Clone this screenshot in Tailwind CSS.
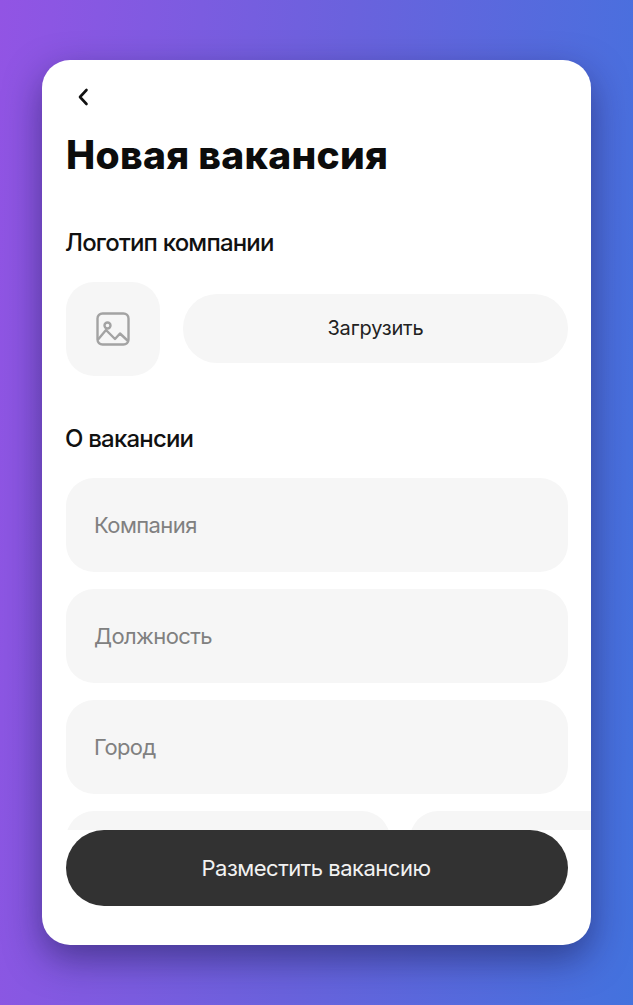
<!DOCTYPE html>
<html lang="ru">
<head>
    <meta charset="UTF-8">
    <meta name="viewport" content="width=device-width, initial-scale=1.0">
    <title>Новая вакансия</title>
    <script src="https://cdn.jsdelivr.net/npm/@tailwindcss/browser@4"></script>
</head>
<body class="h-[1005px] w-[633px] overflow-hidden bg-[linear-gradient(94deg,#9254e4_0%,#6a62dd_50%,#4372de_100%)] pt-[60px] pl-[42px] font-['Inter','Liberation_Sans',sans-serif]">

    <!-- Card -->
    <div class="flex h-[885px] w-[549px] flex-col overflow-hidden rounded-[28px] bg-white shadow-[0_14px_36px_rgba(20,20,70,0.5)]">
        <div class="h-[770px] overflow-hidden pl-6">
            <button class="mt-[26px] ml-[8px] block h-[22px] w-[18px]">
                <svg width="18" height="22" viewBox="0 0 18 22" fill="none" stroke="#111" stroke-width="2.6" stroke-linecap="round" stroke-linejoin="round"><path d="M12.5 4 L6 11 L12.5 18"/></svg>
            </button>
            <h1 class="mt-[22px] text-[39px] leading-[50px] font-extrabold tracking-[0.3px] text-[#0c0c0c]">Новая вакансия</h1>

            <h2 class="mt-[47px] -ml-px text-[24px] leading-[32px] font-medium tracking-[-0.8px] text-[#111]">Логотип компании</h2>
            <div class="mt-[23px] flex items-center gap-[23px]">
                <div class="flex h-[94px] w-[94px] items-center justify-center rounded-[28px] bg-[#f6f6f6]">
                    <svg width="34" height="34" viewBox="0 0 34 34" fill="none" stroke="#a3a3a3" stroke-width="2.4" stroke-linecap="round" stroke-linejoin="round">
                        <rect x="1.5" y="1.5" width="31" height="31" rx="5"/>
                        <circle cx="11.5" cy="13.5" r="3"/>
                        <path d="M2.5 27 L10 18 L19 27 L24 21.5 L32 29"/>
                    </svg>
                </div>
                <button class="mb-[2px] h-[69px] w-[385px] rounded-[34px] bg-[#f6f6f6] text-[20px] tracking-[-0.2px] text-[#222]">Загрузить</button>
            </div>

            <h2 class="mt-[47px] -ml-px text-[24px] leading-[32px] font-medium tracking-[-0.8px] text-[#111]">О вакансии</h2>
            <div class="mt-[22.5px] flex flex-col gap-[17.3px]">
                <div class="flex h-[94px] w-[502px] items-center rounded-[28px] bg-[#f6f6f6] pt-px pl-[28px] text-[22px] tracking-[-0.6px] text-[#808080]">Компания</div>
                <div class="flex h-[94px] w-[502px] items-center rounded-[28px] bg-[#f6f6f6] pt-px pl-[28px] text-[22px] tracking-[-0.6px] text-[#808080]">Должность</div>
                <div class="flex h-[94px] w-[502px] items-center rounded-[28px] bg-[#f6f6f6] pt-px pl-[28px] text-[22px] tracking-[-0.6px] text-[#808080]">Город</div>
                <div class="flex gap-5">
                    <div class="h-[94px] w-[324px] shrink-0 rounded-[28px] bg-[#f6f6f6]"></div>
                    <div class="h-[94px] w-[324px] shrink-0 rounded-[28px] bg-[#f6f6f6]"></div>
                </div>
            </div>
        </div>

        <div class="pl-6">
            <button class="h-[76px] w-[502px] rounded-[38px] bg-[#323232] pr-[2px] text-[22px] tracking-[-0.5px] text-[#f2f2f2]">Разместить вакансию</button>
        </div>
    </div>

</body>
</html>
